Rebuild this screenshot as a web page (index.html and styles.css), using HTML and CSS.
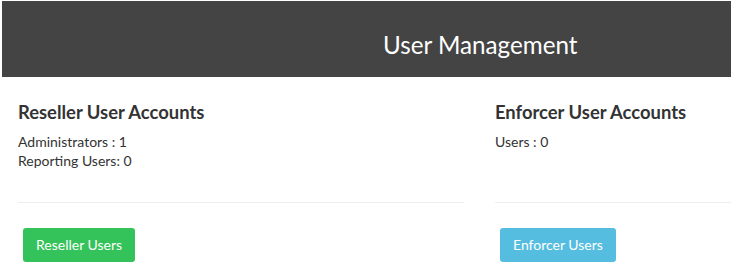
FILE: index.html
```html
<!DOCTYPE html>
<html lang="en">
<head>
    <meta charset="UTF-8">
    <meta name="viewport" content="width=device-width, initial-scale=1.0">
    <title>User Management</title>
    <link rel="stylesheet" href="styles.css">
</head>
<body>
    <div class="page">
        <!-- Header -->
        <div class="header">
            <h1>User Management</h1>
        </div>

        <div class="panels">
            <!-- Reseller -->
            <div class="panel">
                <h2>Reseller User Accounts</h2>
                <p>Administrators : 1</p>
                <p>Reporting Users: 0</p>
                <div class="panel-footer">
                    <button class="btn btn-green">Reseller Users</button>
                </div>
            </div>

            <!-- Enforcer -->
            <div class="panel">
                <h2>Enforcer User Accounts</h2>
                <p>Users : 0</p>
                <div class="panel-footer">
                    <button class="btn btn-blue">Enforcer Users</button>
                </div>
            </div>
        </div>
    </div>
</body>
</html>
```

FILE: styles.css
```css
body {
    font-family: Lato, "Open Sans", sans-serif;
    background-color: white;
    color: #333;
    margin: 0;
    overflow: hidden;
}

.page {
    padding: 1px 0 0 2px;
}

.header {
    background-color: #444;
    height: 76px;
    display: flex;
    align-items: center;
    padding-left: 381px;
}

.header h1 {
    margin: 0;
    color: white;
    font-weight: normal;
    font-size: 24.2px;
    padding-top: 10px;
}

.panels {
    display: grid;
    grid-template-columns: 446px 1fr;
    gap: 31px;
    padding-left: 16px;
}

.panel {
    display: flex;
    flex-direction: column;
    height: 185px;
}

.panel h2 {
    font-size: 18.4px;
    font-weight: bold;
    margin: 24px 0 9px;
}

.panel p {
    font-size: 14px;
    line-height: 19px;
    margin: 0;
}

.panel-footer {
    margin-top: auto;
    border-top: 1px solid #eee;
    padding: 25px 0 0 5px;
}

.btn {
    font-family: Lato, sans-serif;
    font-size: 14px;
    line-height: 18px;
    color: white;
    border: none;
    border-radius: 3px;
    padding: 8px 13px;
    cursor: pointer;
}

.btn-green {
    background-color: #34c35a;
}

.btn-blue {
    background-color: #55bde0;
}
```
